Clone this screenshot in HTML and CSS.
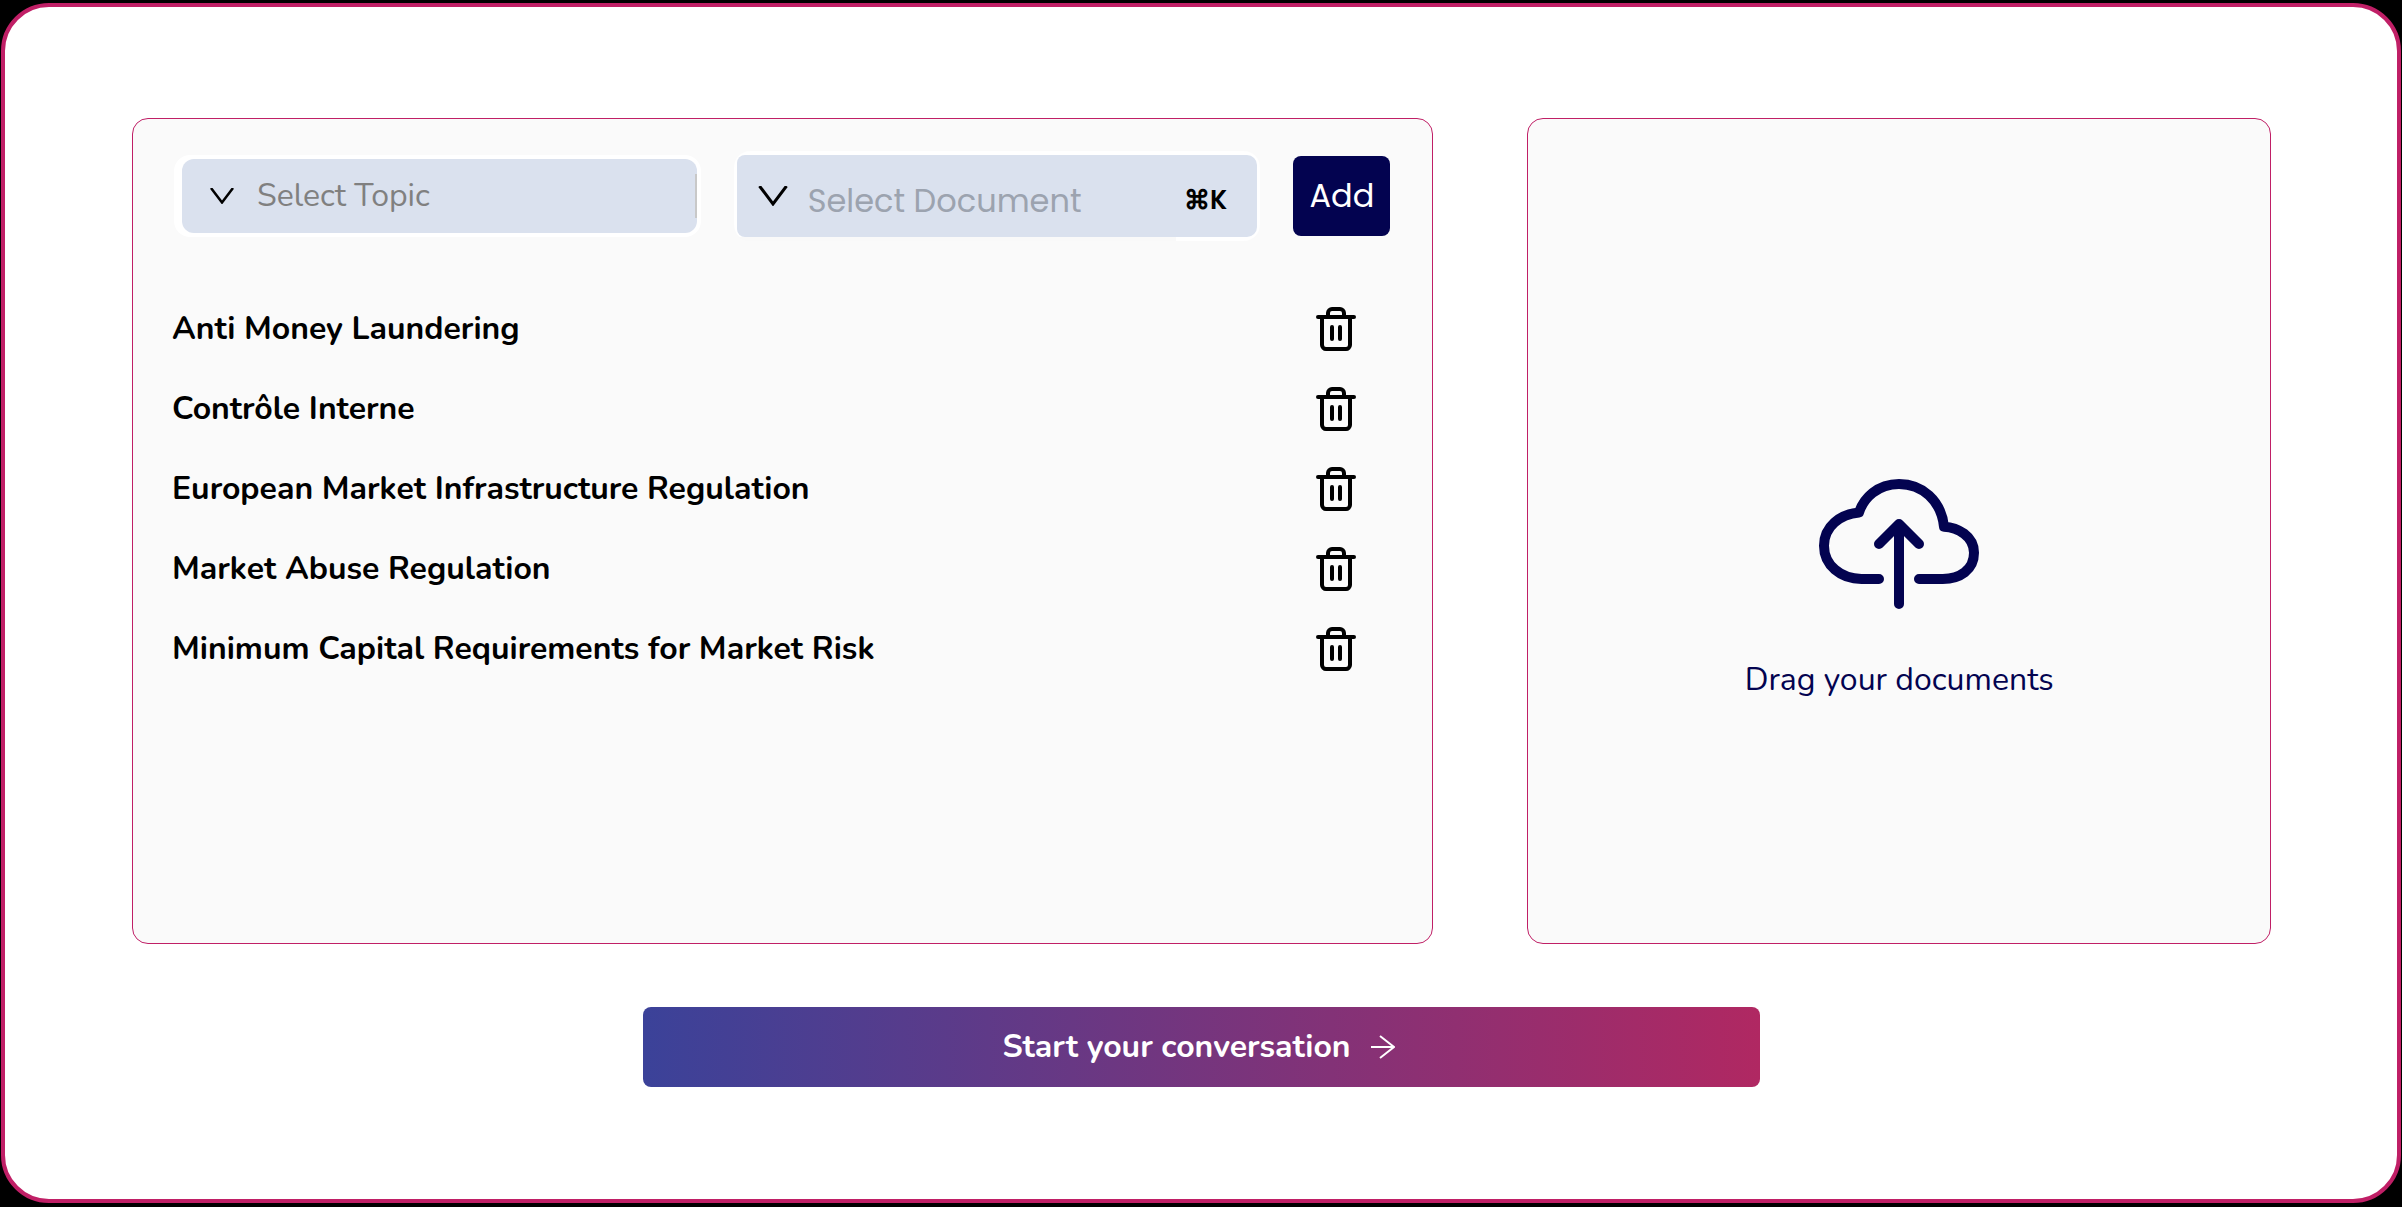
FILE: index.html
```html
<!DOCTYPE html>
<html lang="en">
<head>
<meta charset="utf-8">
<meta name="viewport" content="width=device-width, initial-scale=1">
<title>Start your conversation</title>
<link rel="stylesheet" href="styles.css">
</head>
<body>
<svg class="sprite" aria-hidden="true">
  <symbol id="trash" viewBox="0 0 24 24">
    <path d="M3 6h18M19 6v14c0 1-1 2-2 2H7c-1 0-2-1-2-2V6M8 6V4c0-1 1-2 2-2h4c1 0 2 1 2 2v2M10 11v6M14 11v6"/>
  </symbol>
</svg>
<main class="card">
  <div class="panels">
    <section class="panel">
      <form class="toolbar">
        <div class="field field-topic">
          <div class="field-inner">
            <svg class="chevron-small" viewBox="0 0 24 16" stroke-width="2.5" aria-hidden="true"><path d="M1 0 12 14.500 23 0"/></svg>
            <select class="topic" aria-label="Topic">
              <option>Select Topic</option>
              <option>Anti Money Laundering</option>
              <option>Market Abuse Regulation</option>
            </select>
          </div>
        </div>
        <div class="field field-document">
          <div class="field-inner">
            <svg class="chevron-large" viewBox="0 0 30 20" stroke-width="3" aria-hidden="true"><path d="M1.500 0 15 18 28.500 0"/></svg>
            <input class="document" type="text" placeholder="Select Document" aria-label="Document">
            <kbd class="shortcut">⌘K</kbd>
          </div>
        </div>
        <button class="add" type="button">Add</button>
      </form>
      <ul class="topics">
        <li class="topic-row">Anti Money Laundering
          <button class="remove" type="button" aria-label="Remove Anti Money Laundering"><svg><use href="#trash"/></svg></button></li>
        <li class="topic-row">Contrôle Interne
          <button class="remove" type="button" aria-label="Remove Contrôle Interne"><svg><use href="#trash"/></svg></button></li>
        <li class="topic-row">European Market Infrastructure Regulation
          <button class="remove" type="button" aria-label="Remove European Market Infrastructure Regulation"><svg><use href="#trash"/></svg></button></li>
        <li class="topic-row">Market Abuse Regulation
          <button class="remove" type="button" aria-label="Remove Market Abuse Regulation"><svg><use href="#trash"/></svg></button></li>
        <li class="topic-row">Minimum Capital Requirements for Market Risk
          <button class="remove" type="button" aria-label="Remove Minimum Capital Requirements for Market Risk"><svg><use href="#trash"/></svg></button></li>
      </ul>
    </section>
    <label class="panel dropzone">
      <input class="file" type="file" multiple>
      <svg class="cloud" viewBox="0 0 512 512" aria-hidden="true">
        <path d="M320 367.790h76c55 0 100-29.210 100-83.600s-53-81.470-96-83.600c-8.890-85.060-71-136.800-144-136.800-69 0-113.440 45.790-128 91.200-60 5.700-112 43.880-112 106.400s54 106.400 120 106.400h56"/>
        <path d="M320 255.790l-64-64-64 64M256 448.210V207.790"/>
      </svg>
      <span>Drag your documents</span>
    </label>
  </div>
  <button class="start" type="button">Start your conversation
    <svg class="arrow" viewBox="0 0 24 24" aria-hidden="true"><path d="M0 12h23M9 1l14 11L9 23"/></svg>
  </button>
</main>
</body>
</html>
```

FILE: styles.css
```css
* {
  box-sizing: border-box;
}

body {
  margin: 0;
  min-height: 100vh;
  padding: 3px 1px 4px;
  display: flex;
  background: #000;
  color: #000;
  font: 400 32px/44px Nunito, "Liberation Sans", sans-serif;
}

button,
input,
select {
  margin: 0;
  padding: 0;
  border: 0;
  background: none;
  font: inherit;
  color: inherit;
}

button {
  cursor: pointer;
}

svg {
  flex: none;
  display: block;
  fill: none;
  stroke: currentColor;
}

.sprite {
  position: absolute;
  width: 0;
  height: 0;
}

.card {
  flex: 1;
  min-width: 0;
  display: flex;
  flex-direction: column;
  align-items: center;
  padding: 111px 126px 112px 127px;
  background: #fff;
  border: 4px solid #c01f66;
  border-radius: 48px;
}

.panels {
  flex: 1;
  width: 100%;
  display: grid;
  grid-template-columns: minmax(0, 7fr) minmax(0, 4fr);
  gap: 94px;
}

.panel {
  background: #fafafa;
  border: 1px solid #c01f66;
  border-radius: 16px;
}

.toolbar {
  display: grid;
  grid-template-columns: minmax(0, 1fr) minmax(0, 1fr) 97px;
  align-items: center;
  gap: 33px;
  padding: 32px 42px 0 41px;
}

.field {
  background: #fff;
  border-radius: 16px;
}

.field-topic {
  padding: 4px 4px 4px 8px;
}

.field-document {
  padding: 4px 3px;
  background: linear-gradient(to right, #f9f9f9 84%, #fff 84%) bottom / 100% 4px no-repeat #fff;
}

.field-inner {
  display: flex;
  align-items: center;
  background: #dae1ee;
}

.field-topic .field-inner {
  height: 74px;
  gap: 23px;
  padding-left: 28px;
  border-radius: 12px;
  background: linear-gradient(#c8c8c8, #c8c8c8) right / 2px 44px no-repeat #dae1ee;
}

.field-document .field-inner {
  height: 82px;
  padding: 0 30px 0 21px;
  border-radius: 8px 10px 10px 8px;
}

.chevron-small {
  width: 24px;
  height: 16px;
}

.chevron-large {
  width: 30px;
  height: 20px;
}

.topic {
  flex: 1;
  min-width: 0;
  height: 100%;
  appearance: none;
  color: #808080;
}

.document {
  flex: 1;
  min-width: 0;
  height: 100%;
  margin-left: 20px;
  padding-top: 10px;
  font-family: Poppins, "Liberation Sans", sans-serif;
}

.document::placeholder {
  color: #9ca3af;
  opacity: 1;
}

.shortcut {
  padding-top: 8px;
  font: 600 26px/36px Poppins, "Liberation Sans", sans-serif;
}

.add {
  height: 80px;
  border-radius: 8px;
  background: #030350;
  color: #fff;
  font-family: Poppins, "Liberation Sans", sans-serif;
}

.topics {
  margin: 48px 0 0;
  padding: 0 72px 0 39px;
  list-style: none;
  font-weight: 700;
}

.topic-row {
  display: flex;
  align-items: center;
  justify-content: space-between;
  height: 80px;
}

.remove svg {
  width: 48px;
  height: 48px;
  stroke-width: 2px;
  stroke-linecap: round;
  stroke-linejoin: round;
}

.dropzone {
  display: flex;
  flex-direction: column;
  align-items: center;
  justify-content: center;
  gap: 34px;
  padding-top: 104px;
  color: #030350;
  cursor: pointer;
}

.file {
  position: absolute;
  width: 1px;
  height: 1px;
  opacity: 0;
}

.cloud {
  width: 160px;
  height: 160px;
  stroke-width: 32px;
  stroke-linecap: round;
  stroke-linejoin: round;
}

.start {
  width: 52.2%;
  height: 80px;
  margin-top: 63px;
  padding-right: 6px;
  display: flex;
  align-items: center;
  justify-content: center;
  gap: 20px;
  border-radius: 8px;
  background: linear-gradient(to right, #3b4299, #b02862);
  color: #fff;
  font-weight: 700;
}

.arrow {
  width: 24px;
  height: 24px;
  stroke-width: 2px;
}
```
